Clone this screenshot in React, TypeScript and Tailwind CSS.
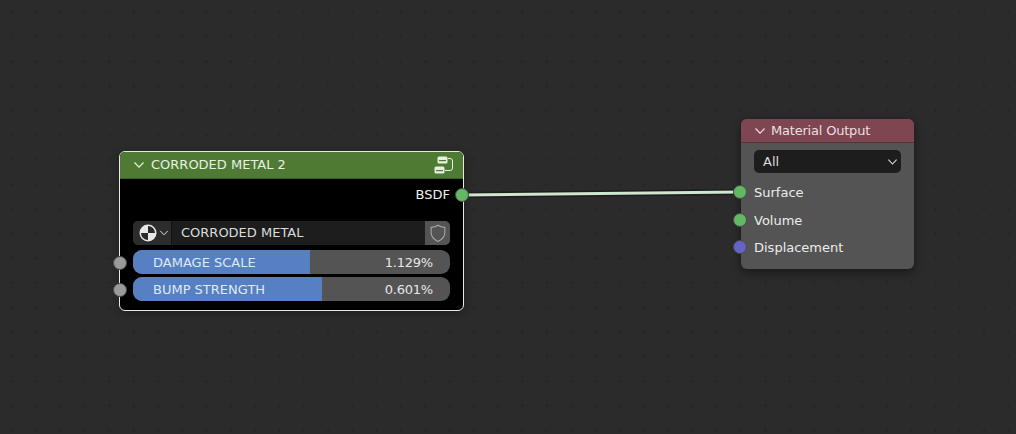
function Chevron({ className }: { className: string }) {
  return (
    <svg width="12" height="8" viewBox="0 0 12 8" fill="none" stroke="currentColor" strokeWidth="1.2" className={className}>
      <path d="M1.5 1.5 6 6.2l4.5-4.7" />
    </svg>
  );
}

function Socket({ color, className }: { color: string; className: string }) {
  return (
    <div className={`absolute w-[14px] h-[14px] rounded-full border border-[#4a4a4a] ${color} ${className}`} />
  );
}

function SliderRow({ label, value, fill }: { label: string; value: string; fill: string }) {
  return (
    <div className="relative h-6 rounded-[9px] overflow-hidden bg-[#545454] flex items-center justify-between pl-5 pr-[17px] pt-[1px] text-[13px] text-[#e6e6e6]">
      <div className={`absolute left-0 top-0 bottom-0 bg-[#5680c2] ${fill}`} />
      <span className="relative text-[#dfe8f5]">{label}</span>
      <span className="relative tracking-[-0.2px]">{value}</span>
    </div>
  );
}

function GroupIcon() {
  return (
    <svg width="20" height="19" viewBox="0 0 20 19" fill="none" className="text-[#e8efe2]">
      <rect x="3.500" y="0.500" width="10" height="7" rx="1.500" fill="currentColor" />
      <rect x="5" y="4" width="7" height="1.200" fill="#4f7a33" />
      <rect x="0.500" y="10.500" width="10" height="7" rx="1.500" fill="currentColor" />
      <rect x="2" y="14" width="7" height="1.200" fill="#4f7a33" />
      <path d="M14 2.500h2a2.500 2.500 0 0 1 2.500 2.500v7a2.500 2.500 0 0 1-2.500 2.500h-5" stroke="currentColor" strokeWidth="1" />
    </svg>
  );
}

function MaterialBall() {
  return (
    <svg width="18" height="18" viewBox="0 0 18 18">
      <circle cx="9" cy="9" r="8.500" fill="#e8e8e8" />
      <path d="M9 2a7 7 0 0 1 7 7H9z" fill="#2a2a2a" />
      <path d="M9 9v7a7 7 0 0 1-7-7z" fill="#2a2a2a" />
    </svg>
  );
}

function ShieldIcon() {
  return (
    <svg width="18" height="19" viewBox="0 0 16 18" fill="none" stroke="#a9a9a9" strokeWidth="1">
      <path d="M8 1.200c2 1.400 4 1.900 6.500 2v5c0 4-2.800 6.500-6.500 8.300-3.700-1.800-6.500-4.300-6.500-8.300v-5c2.500-.1 4.500-.6 6.500-2z" />
    </svg>
  );
}

function CorrodedMetalNode() {
  return (
    <div className="absolute left-[119px] top-[151px] w-[345px] h-[160px] rounded-[6px] shadow-[0_2px_8px_rgba(0,0,0,0.3)]">
      <div className="h-full rounded-[6px] border border-[#e8e8e8] bg-black overflow-hidden flex flex-col">
        <div className="h-[27px] bg-[#4f7a33] border-b border-[#3c5c28] flex items-center pl-[13px] pr-[9px] text-[13px] text-[#e8f0e0]">
          <Chevron className="mr-[6px]" />
          <span>CORRODED METAL 2</span>
          <div className="ml-auto">
            <GroupIcon />
          </div>
        </div>
        <div className="flex justify-end pt-[8px] pr-[13px] text-[13px] leading-4 text-[#f0f0f0]">BSDF</div>
        <div className="mt-[18px] mx-[13px] h-6 flex rounded-[5px] overflow-hidden bg-[#1d1d1d] text-[13px] text-[#dcdcdc]">
          <div className="w-[39px] bg-[#2c2c2c] border-r border-[#111] flex items-center pl-[6px]">
            <MaterialBall />
            <Chevron className="w-[10px] ml-[2px]" />
          </div>
          <div className="flex-1 flex items-center pl-[9px]">CORRODED METAL</div>
          <div className="w-[25px] bg-[#545454] flex items-center justify-center">
            <ShieldIcon />
          </div>
        </div>
        <div className="mx-[13px] mt-[5px] flex flex-col gap-[3px]">
          <SliderRow label="DAMAGE SCALE" value="1.129%" fill="w-[177px]" />
          <SliderRow label="BUMP STRENGTH" value="0.601%" fill="w-[189px]" />
        </div>
      </div>
      <Socket color="bg-[#9a9a9a]" className="left-[-6px] top-[105px]" />
      <Socket color="bg-[#9a9a9a]" className="left-[-6px] top-[132px]" />
      <Socket color="bg-[#5fba63]" className="right-[-5px] top-[37px]" />
    </div>
  );
}

function OutputRow({ label }: { label: string }) {
  return <div className="h-[27.500px] flex items-center pl-[13px] text-[13px] text-[#ececec]">{label}</div>;
}

function MaterialOutputNode() {
  return (
    <div className="absolute left-[741px] top-[119px] w-[173px] h-[150px] shadow-[0_3px_10px_rgba(0,0,0,0.45)] rounded-[6px]">
      <div className="h-full rounded-[6px] bg-[#545454] overflow-hidden">
        <div className="h-[24px] bg-[#7d4650] border-b border-[#55343a] flex items-center pl-[13px] text-[13px] text-[#ecdfe0]">
          <Chevron className="mr-[5px]" />
          <span className="tracking-[-0.2px]">Material Output</span>
        </div>
        <div className="mt-[7px] mx-[13px] h-[23px] rounded-[5px] bg-[#1d1d1d] flex items-center justify-between pl-[9px] pr-[3px] text-[13px] text-[#dcdcdc]">
          <span>All</span>
          <Chevron className="w-[11px]" />
        </div>
        <div className="mt-[6px]">
          <OutputRow label="Surface" />
          <OutputRow label="Volume" />
          <OutputRow label="Displacement" />
        </div>
      </div>
      <Socket color="bg-[#5fba63]" className="left-[-8px] top-[66px]" />
      <Socket color="bg-[#5fba63]" className="left-[-8px] top-[94px]" />
      <Socket color="bg-[#6464c8]" className="left-[-8px] top-[121px]" />
    </div>
  );
}

export default function App() {
  return (
    <div className="relative w-[1016px] h-[434px] overflow-hidden bg-[#2b2b2b] bg-[radial-gradient(circle,#252525_1px,transparent_1.5px)] bg-[size:24.3px_24.6px] font-['DejaVu_Sans',sans-serif]">
      <svg width="1016" height="434" className="absolute left-0 top-0">
        <line x1="462" y1="195" x2="740" y2="192" stroke="#1d1d1d" strokeWidth="6" />
        <line x1="462" y1="195" x2="740" y2="192" stroke="#cfe6cf" strokeWidth="3" />
      </svg>
      <CorrodedMetalNode />
      <MaterialOutputNode />
    </div>
  );
}
